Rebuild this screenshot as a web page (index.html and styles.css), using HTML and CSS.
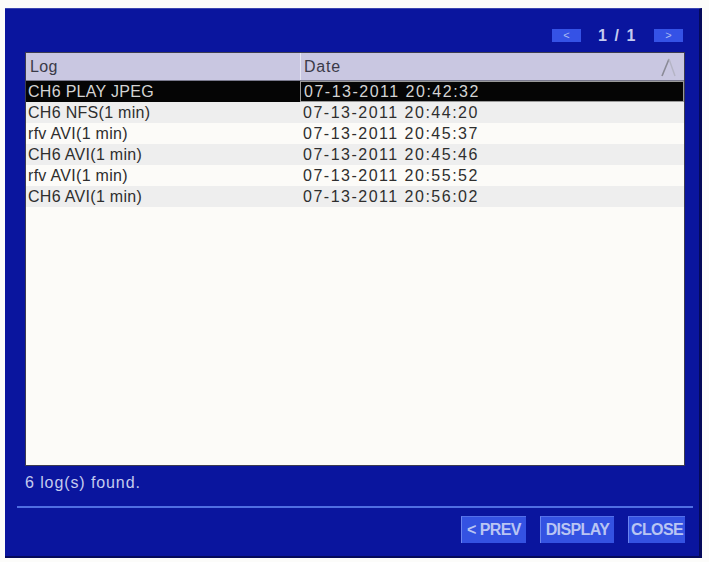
FILE: index.html
```html
<!DOCTYPE html>
<html>
<head>
<meta charset="utf-8">
<link rel="stylesheet" href="styles.css">
</head>
<body>
<div class="panel">
  <div class="topbar">
    <span class="pgbtn">&lt;</span>
    <span class="pages">1 / 1</span>
    <span class="pgbtn">&gt;</span>
  </div>
  <div class="table">
    <div class="thead">
      <div class="c1">Log</div>
      <div class="c2">Date
        <svg class="sort" width="18" height="20" viewBox="0 0 18 20"><polyline points="3,19 10,2" fill="none" stroke="#8a8a96" stroke-width="1.6"/><polyline points="10,2 16,19" fill="none" stroke="#b4b4c4" stroke-width="1.4"/></svg>
      </div>
    </div>
    <div class="row sel"><div class="c1">CH6 PLAY JPEG</div><div class="c2">07-13-2011 20:42:32</div></div>
    <div class="row alt"><div class="c1">CH6 NFS(1 min)</div><div class="c2">07-13-2011 20:44:20</div></div>
    <div class="row"><div class="c1">rfv AVI(1 min)</div><div class="c2">07-13-2011 20:45:37</div></div>
    <div class="row alt"><div class="c1">CH6 AVI(1 min)</div><div class="c2">07-13-2011 20:45:46</div></div>
    <div class="row"><div class="c1">rfv AVI(1 min)</div><div class="c2">07-13-2011 20:55:52</div></div>
    <div class="row alt"><div class="c1">CH6 AVI(1 min)</div><div class="c2">07-13-2011 20:56:02</div></div>
  </div>
  <div class="status">6 log(s) found.</div>
  <div class="sep"></div>
  <div class="actions">
    <span class="btn prev">&lt; PREV</span>
    <span class="btn disp">DISPLAY</span>
    <span class="btn close">CLOSE</span>
  </div>
</div>
</body>
</html>
```
FILE: styles.css
```css
html, body {
  margin: 0;
  padding: 0;
  background: #fcfcfa;
  font-family: "Liberation Sans", Arial, sans-serif;
}
.panel {
  margin: 8px 0 0 5px;
  width: 697px;
  height: 550px;
  box-sizing: border-box;
  background: #0a159e;
  border-top: 1px solid #3a44b0;
  border-right: 3px solid #050a5a;
  border-bottom: 2px solid #050a5a;
  display: flex;
  flex-direction: column;
}
.topbar {
  height: 43px;
  box-sizing: border-box;
  padding: 20px 16px 0 0;
  display: flex;
  justify-content: flex-end;
  align-items: flex-start;
}
.pgbtn {
  width: 29px;
  height: 13px;
  background: #3552e6;
  color: #aebcf2;
  font-size: 11px;
  line-height: 13px;
  text-align: center;
}
.pages {
  width: 73px;
  text-align: center;
  color: #c4cbf0;
  font-size: 16px;
  font-weight: bold;
  line-height: 13px;
  letter-spacing: 1.6px;
}
.table {
  margin: 0 14px 0 20px;
  height: 414px;
  box-sizing: border-box;
  background: #fcfbf8;
  border: 1px solid #3c3c50;
  font-size: 16px;
  letter-spacing: 0.3px;
  color: #2e2e2e;
}
.thead {
  height: 27px;
  background: #c9c7e1;
  border-bottom: 1px solid #7a7a8e;
  display: flex;
}
.thead .c1, .thead .c2 {
  line-height: 28px;
  color: #3a3a48;
}
.thead .c1 {
  padding-left: 4px;
}
.thead .c2 {
  border-left: 1px solid #e6e6f2;
  position: relative;
  letter-spacing: 0.8px;
}
.sort {
  position: absolute;
  right: 7px;
  top: 4px;
}
.c1 {
  width: 274px;
  box-sizing: border-box;
  padding-left: 2px;
  white-space: nowrap;
}
.c2 {
  flex: 1;
  box-sizing: border-box;
  padding-left: 3px;
  white-space: nowrap;
}
.row .c2 {
  letter-spacing: 1.5px;
}
.row {
  height: 21px;
  line-height: 21px;
  display: flex;
}
.row.alt {
  background: #eeeeee;
}
.row.sel {
  background: #050505;
  color: #d4d4d4;
}
.row.sel .c2 {
  border: 1px solid #9a9a9a;
  line-height: 19px;
}
.status {
  height: 40px;
  box-sizing: border-box;
  padding: 8px 0 0 20px;
  font-size: 16px;
  line-height: 18px;
  color: #c4cbee;
  letter-spacing: 0.9px;
}
.sep {
  margin: 0 6px 0 12px;
  height: 2px;
  background: #4f6ee2;
}
.actions {
  padding: 8px 14px 0 0;
  display: flex;
  justify-content: flex-end;
  gap: 14px;
}
.btn {
  height: 27px;
  box-sizing: border-box;
  background: #3452e2;
  color: #b9c5f3;
  font-size: 16px;
  font-weight: bold;
  line-height: 26px;
  text-align: center;
  border-left: 1px solid #6a84f0;
  border-top: 1px solid #5470ea;
  letter-spacing: -0.6px;
}
.prev { width: 65px; }
.disp { width: 74px; }
.close { width: 57px; }
```
